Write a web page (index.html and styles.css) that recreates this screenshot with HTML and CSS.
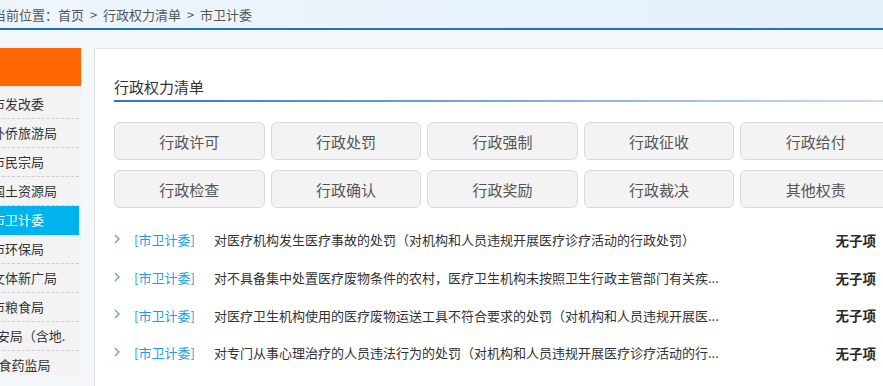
FILE: index.html
```html
<!DOCTYPE html>
<html lang="zh-CN">
<head>
  <meta charset="UTF-8" />
  <title>行政权力清单 – 市卫计委</title>
  <meta name="viewport" content="width=device-width, initial-scale=1" />
  <link rel="stylesheet" href="styles.css">
</head>
<body>

<div class="crumb"><span>当前位置：首页 &gt; 行政权力清单 &gt; 市卫计委</span></div>

<div class="page">
  <aside class="side">
    <div class="side-head"></div>
    <div class="side-body">
      <ul class="side-list">
        <li>市发改委</li>
        <li>市外侨旅游局</li>
        <li>市民宗局</li>
        <li>市国土资源局</li>
        <li class="on">市卫计委</li>
        <li>市环保局</li>
        <li>市文体新广局</li>
        <li>市粮食局</li>
        <li>市公安局（含地.</li>
        <li>市食药监局</li>
      </ul>
    </div>
  </aside>

  <main class="panel">
    <h2 class="panel-title">行政权力清单</h2>

    <div class="types">
      <button>行政许可</button>
      <button>行政处罚</button>
      <button>行政强制</button>
      <button>行政征收</button>
      <button>行政给付</button>
      <button>行政检查</button>
      <button>行政确认</button>
      <button>行政奖励</button>
      <button>行政裁决</button>
      <button>其他权责</button>
    </div>

    <ul class="items">
      <li>
        <svg class="arrow" width="6" height="10" viewBox="0 0 6 10"><path d="M1 1l4 4-4 4" fill="none" stroke="#5f9fd8" stroke-width="1.3"/></svg>
        <span class="tag">[市卫计委]</span>
        <span class="title">对医疗机构发生医疗事故的处罚（对机构和人员违规开展医疗诊疗活动的行政处罚）</span>
        <span class="status">无子项</span>
      </li>
      <li>
        <svg class="arrow" width="6" height="10" viewBox="0 0 6 10"><path d="M1 1l4 4-4 4" fill="none" stroke="#5f9fd8" stroke-width="1.3"/></svg>
        <span class="tag">[市卫计委]</span>
        <span class="title">对不具备集中处置医疗废物条件的农村，医疗卫生机构未按照卫生行政主管部门有关疾...</span>
        <span class="status">无子项</span>
      </li>
      <li>
        <svg class="arrow" width="6" height="10" viewBox="0 0 6 10"><path d="M1 1l4 4-4 4" fill="none" stroke="#5f9fd8" stroke-width="1.3"/></svg>
        <span class="tag">[市卫计委]</span>
        <span class="title">对医疗卫生机构使用的医疗废物运送工具不符合要求的处罚（对机构和人员违规开展医...</span>
        <span class="status">无子项</span>
      </li>
      <li>
        <svg class="arrow" width="6" height="10" viewBox="0 0 6 10"><path d="M1 1l4 4-4 4" fill="none" stroke="#5f9fd8" stroke-width="1.3"/></svg>
        <span class="tag">[市卫计委]</span>
        <span class="title">对专门从事心理治疗的人员违法行为的处罚（对机构和人员违规开展医疗诊疗活动的行...</span>
        <span class="status">无子项</span>
      </li>
    </ul>
  </main>
</div>

</body>
</html>
```

FILE: styles.css
```css
:root {
  --blue: #1f6fd1;
  --orange: #ff6600;
  --cyan: #00b2ee;
  --tag: #1ea0df;
  --text: #333;
  --gray: #555;
  --line: #e2e2e2;
}

* {
  box-sizing: border-box;
}

body {
  margin: 0;
  width: 883px;
  height: 386px;
  overflow: hidden;
  background: #f4f8fb;
  font-family: "Noto Sans CJK SC", "Microsoft YaHei", sans-serif;
  color: var(--text);
}

/* breadcrumb */
.crumb {
  height: 30px;
  padding-top: 2px;
  line-height: 26px;
  font-size: 13px;
  color: var(--gray);
  white-space: nowrap;
  background: linear-gradient(to right, #eef5fb, #e4f0fa);
  border-bottom: 2px solid var(--blue);
}

.crumb span {
  display: inline-block;
  margin-left: -7px;
  word-spacing: 3px;
}

.page {
  display: flex;
  gap: 13px;
  padding-top: 18px;
}

/* left menu */
.side {
  flex: none;
  width: 81px;
  overflow: hidden;
}

.side-head {
  height: 38px;
  background: var(--orange);
}

.side-body {
  height: 289px;
  padding-top: 4px;
  overflow: hidden;
  background: #f3f3f3;
}

.side-list {
  list-style: none;
  margin: 0 0 0 -47px;
  padding: 0;
  width: 126px;
}

.side-list li {
  height: 29px;
  line-height: 28px;
  padding-left: 4px;
  text-align: center;
  white-space: nowrap;
  font-size: 13px;
  color: var(--text);
  border-bottom: 1px dashed #cdcdcd;
}

.side-list li.on {
  background: var(--cyan);
  color: #fff;
  border-bottom-color: var(--cyan);
}

/* main panel */
.panel {
  flex: none;
  width: 817px;
  height: 338px;
  padding: 0 19px;
  background: #fff;
  border: 1px solid var(--line);
  border-bottom: none;
}

.panel-title {
  margin: 28px 0 0;
  padding-bottom: 5px;
  font-size: 15px;
  font-weight: normal;
  line-height: 20px;
  color: var(--text);
  background: linear-gradient(to right, #2a74d6, #cbdcf1) left bottom / 100% 2px no-repeat;
}

.types {
  display: grid;
  grid-template-columns: repeat(5, 1fr);
  gap: 10px 6px;
  margin-top: 20px;
}

.types button {
  height: 38px;
  border: 1px solid #dadada;
  border-radius: 6px;
  background: #f3f3f3;
  font-family: inherit;
  font-size: 15px;
  color: var(--gray);
  cursor: pointer;
}

.types button:hover {
  background: #eaeaea;
}

.items {
  list-style: none;
  margin: 13px 0 0;
  padding: 0;
}

.items li {
  display: flex;
  align-items: center;
  height: 37.7px;
  font-size: 13px;
  white-space: nowrap;
}

.arrow {
  flex: none;
  margin-right: 14px;
  margin-bottom: 2px;
}

.tag {
  flex: none;
  width: 80px;
  color: var(--tag);
}

.title {
  flex: none;
  width: 508px;
  overflow: hidden;
  color: var(--text);
}

.status {
  margin-left: auto;
  margin-right: 15px;
  font-size: 13.5px;
  font-weight: bold;
  color: #2a2a2a;
}
```
